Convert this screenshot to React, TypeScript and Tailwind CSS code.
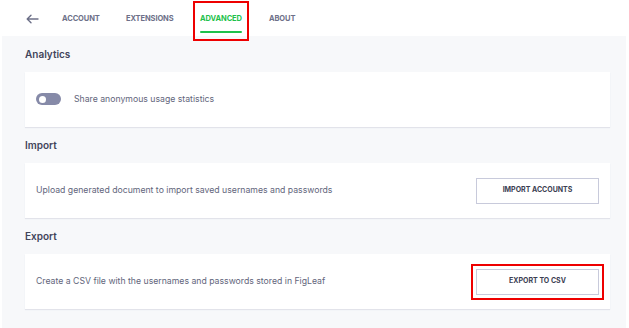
import React from "react";

function Card({ children }: { children: React.ReactNode }) {
  return (
    <div className="bg-white h-[55px] flex items-center justify-between pl-[11px] pr-[11px] shadow-[0_1px_1px_#e2e3ea]">
      {children}
    </div>
  );
}

export default function App() {
  return (
    <div className="w-[629px] h-[328px] bg-white overflow-hidden" style={{ fontFamily: "Inter, 'Open Sans', sans-serif" }}>
      <div className="h-[36px] flex items-center relative">
        <svg className="absolute left-[26px] top-[14px]" width="13" height="10" viewBox="0 0 13 10" fill="none">
          <path d="M12 5H1.5M5 1.2L1.2 5L5 8.8" stroke="#6d7088" strokeWidth="1.4" strokeLinecap="round" strokeLinejoin="round" />
        </svg>
        <span className="absolute left-[62px] top-[14px] text-[7.5px] font-bold text-[#6d7088] leading-[10px] tracking-[-0.1px]">ACCOUNT</span>
        <span className="absolute left-[126px] top-[14px] text-[7.5px] font-bold text-[#6d7088] leading-[10px] tracking-[-0.1px]">EXTENSIONS</span>
        <div className="absolute left-[193px] top-[1px] w-[56px] h-[40px] border-2 border-[#ee0000] z-10 flex flex-col items-center">
          <span className="mt-[11px] text-[7.5px] font-bold text-[#1ec14b] leading-[10px] tracking-[-0.1px]">ADVANCED</span>
          <div className="mt-[7px] w-[42px] h-[2px] bg-[#1ec14b] rounded" />
        </div>
        <span className="absolute left-[269px] top-[14px] text-[7.5px] font-bold text-[#6d7088] leading-[10px] tracking-[-0.1px]">ABOUT</span>
      </div>
      <div className="ml-[2px] w-[624px] h-[292px] bg-[#f7f8fa] pl-[23px] pr-[16px]">
        <div className="h-[36px] flex items-center text-[10px] font-semibold text-[#42455a]">Analytics</div>
        <Card>
          <div className="flex items-center">
            <div className="w-[25px] h-[12px] rounded-full bg-[#868aa8] flex items-center pl-[3px]">
              <div className="w-[7px] h-[7px] rounded-full bg-white" />
            </div>
            <span className="ml-[13px] text-[8.7px] text-[#62657b]">Share anonymous usage statistics</span>
          </div>
        </Card>
        <div className="h-[36px] flex items-center text-[10px] font-semibold text-[#42455a]">Import</div>
        <Card>
          <span className="text-[8.7px] text-[#62657b]">Upload generated document to import saved usernames and passwords</span>
          <div className="w-[123px] h-[26px] border border-[#c8cadb] flex items-center justify-center text-[7px] font-bold text-[#3b3e52]">IMPORT ACCOUNTS</div>
        </Card>
        <div className="h-[36px] flex items-center text-[10px] font-semibold text-[#42455a]">Export</div>
        <Card>
          <span className="text-[8.7px] text-[#62657b]">Create a CSV file with the usernames and passwords stored in FigLeaf</span>
          <div className="relative w-[123px] h-[26px] border border-[#c8cadb] flex items-center justify-center text-[7px] font-bold text-[#3b3e52]">
            EXPORT TO CSV
            <div className="absolute left-[-6px] top-[-6px] right-[-6px] bottom-[-6px] border-2 border-[#ee0000]" />
          </div>
        </Card>
      </div>
    </div>
  );
}
